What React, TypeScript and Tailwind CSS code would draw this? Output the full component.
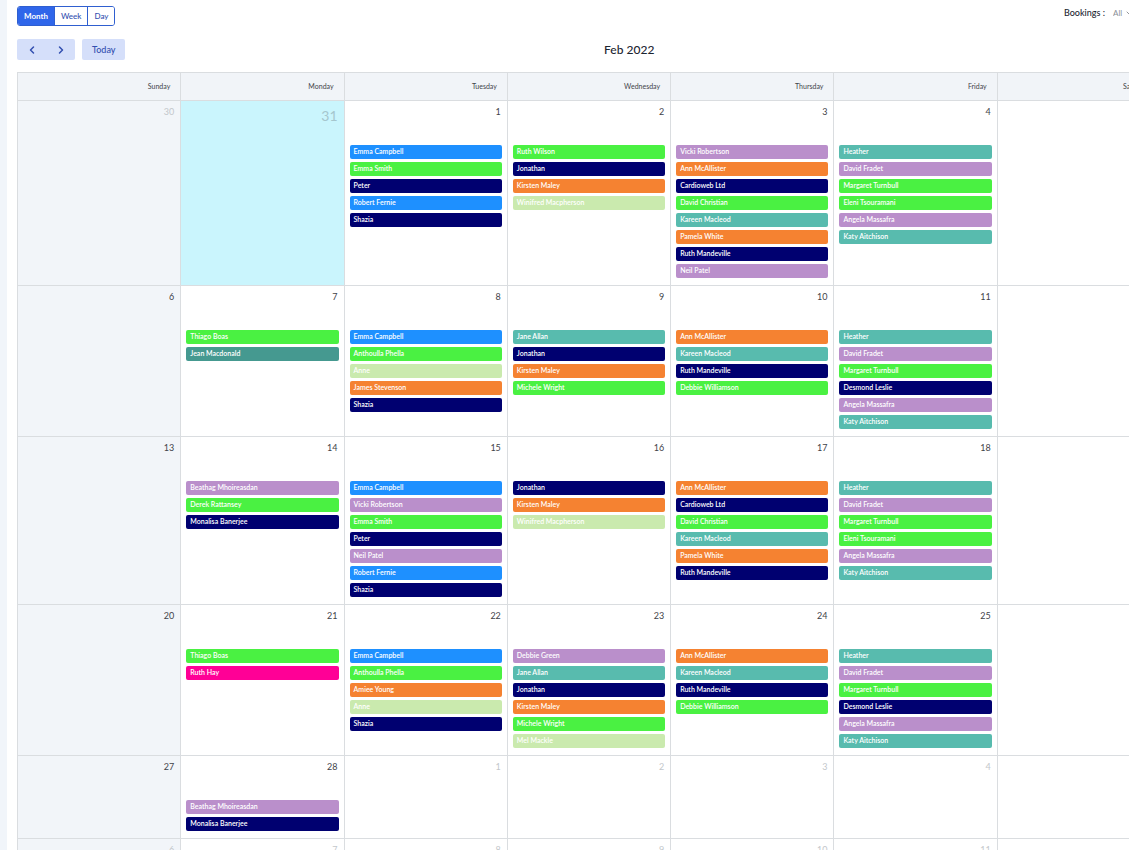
import React, { useState } from 'react';
import { ChevronDown, ChevronLeft, ChevronRight } from 'lucide-react';

type Tone = 'blue' | 'green' | 'navy' | 'orange' | 'pale' | 'purple' | 'teal' | 'pine' | 'pink';

interface Booking {
  name: string;
  tone: Tone;
}

interface Day {
  date: number;
  outside?: boolean;
  today?: boolean;
  bookings?: Booking[];
}

const toneClasses: Record<Tone, string> = {
  blue: 'bg-[#1e90ff]',
  green: 'bg-[#4af142]',
  navy: 'bg-[#000070]',
  orange: 'bg-[#f58231]',
  pale: 'bg-[#caeaae]',
  purple: 'bg-[#ba8fcb]',
  teal: 'bg-[#58bbae]',
  pine: 'bg-[#459990]',
  pink: 'bg-[#ff0096]',
};

const b = (name: string, tone: Tone): Booking => ({ name, tone });

const emma = b('Emma Campbell', 'blue');
const emmaSmith = b('Emma Smith', 'green');
const peter = b('Peter', 'navy');
const robert = b('Robert Fernie', 'blue');
const shazia = b('Shazia', 'navy');
const jonathan = b('Jonathan', 'navy');
const kirsten = b('Kirsten Maley', 'orange');
const winifred = b('Winifred Macpherson', 'pale');
const vicki = b('Vicki Robertson', 'purple');
const ann = b('Ann McAllister', 'orange');
const cardioweb = b('Cardioweb Ltd', 'navy');
const davidC = b('David Christian', 'green');
const kareen = b('Kareen Macleod', 'teal');
const pamela = b('Pamela White', 'orange');
const ruthM = b('Ruth Mandeville', 'navy');
const neil = b('Neil Patel', 'purple');
const heather = b('Heather', 'teal');
const davidF = b('David Fradet', 'purple');
const margaret = b('Margaret Turnbull', 'green');
const eleni = b('Eleni Tsouramani', 'green');
const desmond = b('Desmond Leslie', 'navy');
const angela = b('Angela Massafra', 'purple');
const katy = b('Katy Aitchison', 'teal');
const thiago = b('Thiago Boas', 'green');
const anthoulla = b('Anthoulla Phella', 'green');
const anne = b('Anne', 'pale');
const jane = b('Jane Allan', 'teal');
const michele = b('Michele Wright', 'green');
const debbieW = b('Debbie Williamson', 'green');
const beathag = b('Beathag Mhoireasdan', 'purple');
const monalisa = b('Monalisa Banerjee', 'navy');

const weekdays = ['Sunday', 'Monday', 'Tuesday', 'Wednesday', 'Thursday', 'Friday', 'Saturday'];

const weeks: Day[][] = [
  [
    { date: 30, outside: true },
    { date: 31, outside: true, today: true },
    { date: 1, bookings: [emma, emmaSmith, peter, robert, shazia] },
    { date: 2, bookings: [b('Ruth Wilson', 'green'), jonathan, kirsten, winifred] },
    { date: 3, bookings: [vicki, ann, cardioweb, davidC, kareen, pamela, ruthM, neil] },
    { date: 4, bookings: [heather, davidF, margaret, eleni, angela, katy] },
    { date: 5 },
  ],
  [
    { date: 6 },
    { date: 7, bookings: [thiago, b('Jean Macdonald', 'pine')] },
    { date: 8, bookings: [emma, anthoulla, anne, b('James Stevenson', 'orange'), shazia] },
    { date: 9, bookings: [jane, jonathan, kirsten, michele] },
    { date: 10, bookings: [ann, kareen, ruthM, debbieW] },
    { date: 11, bookings: [heather, davidF, margaret, desmond, angela, katy] },
    { date: 12 },
  ],
  [
    { date: 13 },
    { date: 14, bookings: [beathag, b('Derek Rattansey', 'green'), monalisa] },
    { date: 15, bookings: [emma, vicki, emmaSmith, peter, neil, robert, shazia] },
    { date: 16, bookings: [jonathan, kirsten, winifred] },
    { date: 17, bookings: [ann, cardioweb, davidC, kareen, pamela, ruthM] },
    { date: 18, bookings: [heather, davidF, margaret, eleni, angela, katy] },
    { date: 19 },
  ],
  [
    { date: 20 },
    { date: 21, bookings: [thiago, b('Ruth Hay', 'pink')] },
    { date: 22, bookings: [emma, anthoulla, b('Amiee Young', 'orange'), anne, shazia] },
    {
      date: 23,
      bookings: [b('Debbie Green', 'purple'), jane, jonathan, kirsten, michele, b('Mel Mackle', 'pale')],
    },
    { date: 24, bookings: [ann, kareen, ruthM, debbieW] },
    { date: 25, bookings: [heather, davidF, margaret, desmond, angela, katy] },
    { date: 26 },
  ],
  [
    { date: 27 },
    { date: 28, bookings: [beathag, monalisa] },
    { date: 1, outside: true },
    { date: 2, outside: true },
    { date: 3, outside: true },
    { date: 4, outside: true },
    { date: 5, outside: true },
  ],
  [6, 7, 8, 9, 10, 11, 12].map((date) => ({ date, outside: true })),
];

const ViewSwitch: React.FC = () => {
  const [view, setView] = useState('Month');

  return (
    <div className="flex h-5 divide-x divide-[#2f5fd0] overflow-hidden rounded-[3px] border border-[#2f5fd0]">
      {['Month', 'Week', 'Day'].map((name) => (
        <button
          key={name}
          type="button"
          onClick={() => setView(name)}
          className={`px-[6px] text-[8px] leading-none ${
            view === name ? 'bg-[#2f66ea] font-bold text-white' : 'bg-white font-medium text-[#3350b0]'
          }`}
        >
          {name}
        </button>
      ))}
    </div>
  );
};

const DayCell: React.FC<{ day: Day; sunday: boolean }> = ({ day, sunday }) => {
  const background = day.today ? 'bg-[#caf5fd]' : sunday ? 'bg-[#f2f5f9]' : 'bg-white';
  const size = day.today ? 'pt-2 text-sm' : 'pt-1 text-[9px]';
  const color = day.today ? 'text-[#a5c6ce]' : day.outside ? 'text-[#c3c7cb]' : 'text-[#3f4349]';

  return (
    <td className={`border-t border-l border-[#dadde0] px-[5px] pb-1 align-top ${background}`}>
      <div className={`h-11 pr-px text-right leading-[14px] ${size} ${color}`}>{day.date}</div>
      {day.bookings && (
        <ul>
          {day.bookings.map((booking) => (
            <li key={booking.name} className="mb-[3px]">
              <a
                href="#"
                className={`block h-[14px] truncate rounded-[2px] px-1 text-[7px] leading-[13px] font-semibold text-white ${
                  toneClasses[booking.tone]
                }`}
              >
                {booking.name}
              </a>
            </li>
          ))}
        </ul>
      )}
    </td>
  );
};

export default function App() {
  return (
    <div className="flex h-screen overflow-hidden bg-white font-['Lato',sans-serif]">
      <div className="w-[7px] shrink-0 bg-[#f1f5fa]" />
      <main className="min-w-0 grow pt-[6px] pl-[10px]">
        <div className="-mr-8 flex h-[33px] items-start justify-between">
          <ViewSwitch />
          <div className="flex items-center">
            <label htmlFor="bookings" className="pr-2 text-[9px] leading-[14px] font-medium text-[#1c2530]">
              Bookings :
            </label>
            <select
              id="bookings"
              className="w-3 appearance-none bg-transparent text-[8px] leading-[14px] text-[#8a8f96]"
            >
              <option>All</option>
            </select>
            <ChevronDown className="mr-7 size-2 text-[#5c6168]" />
          </div>
        </div>

        {/* Month navigation */}
        <div className="-mr-1 flex items-center justify-between">
          <div className="flex gap-[7px]">
            <div className="flex overflow-hidden rounded-[2px] bg-[#d5dffa] text-[#3350b0]">
              <button type="button" aria-label="Previous month" className="flex h-[21px] w-[29px] items-center justify-center">
                <ChevronLeft className="size-3" strokeWidth={3} />
              </button>
              <button type="button" aria-label="Next month" className="flex h-[21px] w-[29px] items-center justify-center">
                <ChevronRight className="size-3" strokeWidth={3} />
              </button>
            </div>
            <button
              type="button"
              className="h-[21px] rounded-[2px] bg-[#d5dffa] px-[10px] text-[9px] leading-none font-medium text-[#3350b0]"
            >
              Today
            </button>
          </div>
          <h1 className="text-xs leading-4 font-medium text-[#1c2530]">Feb 2022</h1>
          <div />
        </div>

        <div className="-mr-[31px] pt-3">
          <table className="w-full table-fixed border-separate border-spacing-0">
            <thead>
              <tr>
                {weekdays.map((name) => (
                  <th
                    key={name}
                    scope="col"
                    className="h-7 border-t border-l border-[#dadde0] bg-[#f1f4f8] pr-[10px] text-right text-[7px] font-normal text-[#3f4349]"
                  >
                    {name}
                  </th>
                ))}
              </tr>
            </thead>
            <tbody>
              {weeks.map((week, i) => (
                <tr key={i}>
                  {week.map((day, j) => (
                    <DayCell key={day.date} day={day} sunday={j === 0} />
                  ))}
                </tr>
              ))}
            </tbody>
          </table>
        </div>
      </main>
    </div>
  );
}
